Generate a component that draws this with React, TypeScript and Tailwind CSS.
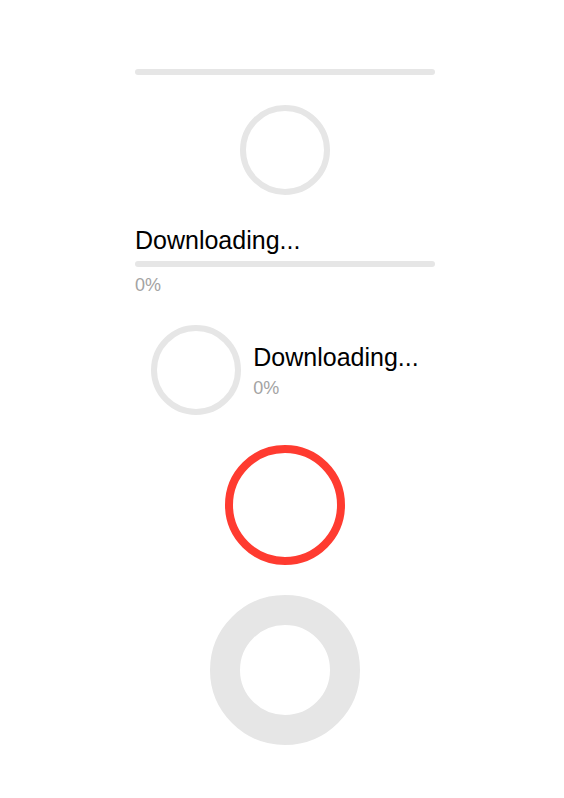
import React from "react";

function Bar() {
  return <div className="h-[6px] w-full rounded-full bg-[#e6e6e6]" />;
}

function Ring({ size, stroke, color }: { size: string; stroke: string; color: string }) {
  return <div className={`${size} ${stroke} ${color} rounded-full`} />;
}

export default function App() {
  return (
    <div className="min-h-[798px] bg-white font-['Liberation_Sans',Arial,sans-serif]">
      <div className="ml-[135px] flex w-[300px] flex-col items-center gap-[30px] pt-[69px]">
        <Bar />

        <Ring size="h-[90px] w-[90px]" stroke="border-[6px]" color="border-[#e6e6e6]" />

        <div className="flex w-full flex-col gap-[6px]">
          <p className="text-[25px] leading-[30px] text-black">Downloading...</p>
          <Bar />
          <p className="mt-[2px] text-[18px] leading-[20px] text-[#a3a3a3]">0%</p>
        </div>

        <div className="flex items-center justify-center gap-[12px]">
          <Ring size="h-[90px] w-[90px]" stroke="border-[6px]" color="border-[#e6e6e6]" />
          <div className="flex flex-col gap-[5px]">
            <p className="text-[25px] leading-[30px] text-black">Downloading...</p>
            <p className="text-[18px] leading-[22px] text-[#a3a3a3]">0%</p>
          </div>
        </div>

        <Ring size="h-[120px] w-[120px]" stroke="border-[8px]" color="border-[#ff3b30]" />

        <Ring size="h-[150px] w-[150px]" stroke="border-[30px]" color="border-[#e6e6e6]" />
      </div>
    </div>
  );
}
